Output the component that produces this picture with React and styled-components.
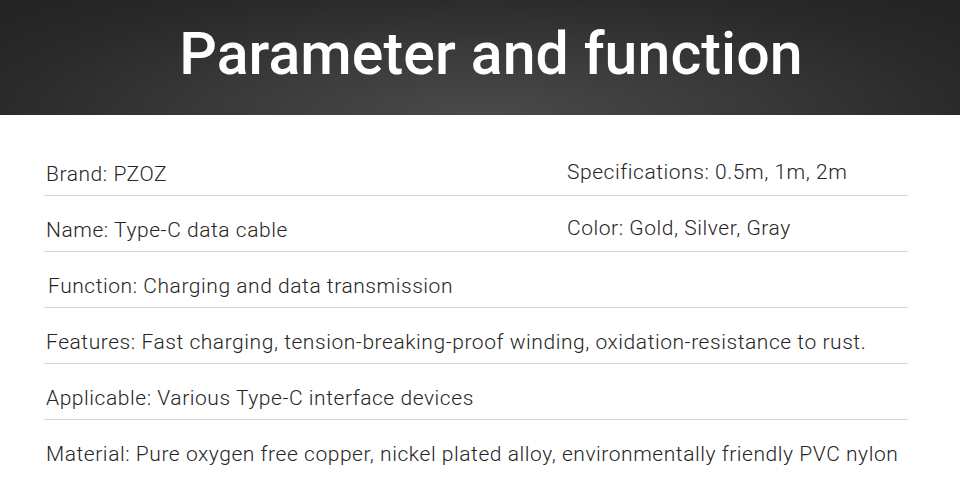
import React from 'react';
import styled, { createGlobalStyle } from 'styled-components';

const GlobalStyle = createGlobalStyle`
  html, body {
    margin: 0;
    padding: 0;
    background: #ffffff;
  }
  body {
    font-family: Roboto, "Liberation Sans", Arial, sans-serif;
  }
`;

const Page = styled.div`
  width: 960px;
  height: 499px;
  overflow: hidden;
  background: #ffffff;
`;

const Banner = styled.header`
  height: 115px;
  display: flex;
  align-items: center;
  justify-content: center;
  padding-left: 22px;
  box-sizing: border-box;
  background:
    radial-gradient(ellipse 600px 150px at 50% 100%, #4a4a4a 0%, #393939 45%, #2a2a2a 80%, #252525 100%);
`;

const Title = styled.h1`
  margin: 0 0 8px;
  color: #ffffff;
  font-family: Roboto, "Liberation Sans", Arial, sans-serif;
  font-weight: 500;
  font-size: 59px;
  letter-spacing: 0.1px;
`;

const SpecList = styled.section`
  margin: 25px 52px 0 44px;
`;

const SpecRow = styled.div`
  display: grid;
  grid-template-columns: ${p => (p.$split ? '521px 1fr' : '1fr')};
  height: 56px;
  box-sizing: border-box;
  padding: 22px 0 0 ${p => p.$indent || 2}px;
  border-bottom: ${p => (p.$last ? 'none' : '1px solid #d4d4d4')};
`;

const Cell = styled.span`
  font-family: Roboto, "Liberation Sans", Arial, sans-serif;
  font-weight: 300;
  font-size: 21px;
  line-height: 24px;
  letter-spacing: 0.55px;
  color: #262626;
  white-space: nowrap;
  position: relative;
  top: ${p => p.$lift || 0}px;
`;

const rows = [
  { left: 'Brand: PZOZ', right: 'Specifications: 0.5m, 1m, 2m' },
  { left: 'Name: Type-C data cable', right: 'Color: Gold, Silver, Gray' },
  { left: 'Function: Charging and data transmission', indent: 4 },
  { left: 'Features: Fast charging, tension-breaking-proof winding, oxidation-resistance to rust.' },
  { left: 'Applicable: Various Type-C interface devices' },
  { left: 'Material: Pure oxygen free copper, nickel plated alloy, environmentally friendly PVC nylon' },
];

const App = () => (
  <Page>
    <GlobalStyle />
    <Banner>
      <Title>Parameter and function</Title>
    </Banner>
    <SpecList>
      {rows.map((row, i) => (
        <SpecRow key={i} $split={!!row.right} $indent={row.indent} $last={i === rows.length - 1}>
          <Cell>{row.left}</Cell>
          {row.right && <Cell $lift={-2}>{row.right}</Cell>}
        </SpecRow>
      ))}
    </SpecList>
  </Page>
);

export default App;
